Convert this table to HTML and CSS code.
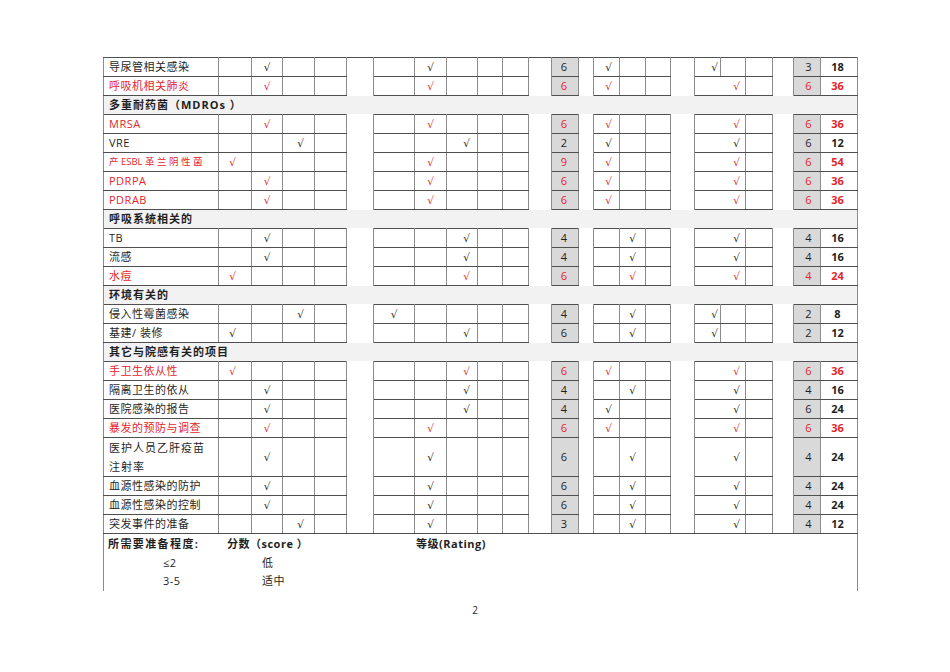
FILE: index.html
```html
<!DOCTYPE html>
<html lang="zh">
<head>
<meta charset="utf-8">
<title>院感风险评估</title>
<link rel="stylesheet" href="styles.css">
</head>
<body>
<div class="page">
<table class="grid">
<colgroup>
<col style="width:115px"><col style="width:33px"><col style="width:31px"><col style="width:32px"><col style="width:32px">
<col style="width:27px">
<col style="width:41px"><col style="width:32px"><col style="width:31px"><col style="width:25px"><col style="width:26px">
<col style="width:23px"><col style="width:27px"><col style="width:15px">
<col style="width:26px"><col style="width:26px"><col style="width:25px">
<col style="width:24px">
<col style="width:26px"><col style="width:25px"><col style="width:27px">
<col style="width:21px"><col style="width:27px"><col style="width:37px">
</colgroup>
<tbody>
<tr class="first">
<td class="n">导尿管相关感染</td>
<td></td><td class="k-b">√</td><td></td><td></td><td class="g"></td>
<td></td><td class="k-f">√</td><td></td><td></td><td></td><td class="g"></td>
<td class="s">6</td><td class="g"></td>
<td class="k-j">√</td><td></td><td></td><td class="g"></td>
<td class="k-m">√</td><td></td><td></td><td class="g"></td>
<td class="s s2">3</td><td class="t">18</td>
</tr>
<tr class="r">
<td class="n">呼吸机相关肺炎</td>
<td></td><td class="k-b">√</td><td></td><td></td><td class="g"></td>
<td></td><td class="k-f">√</td><td></td><td></td><td></td><td class="g"></td>
<td class="s">6</td><td class="g"></td>
<td class="k-j">√</td><td></td><td></td><td class="g"></td>
<td class="k-mn" colspan="2">√</td><td></td><td class="g"></td>
<td class="s s2">6</td><td class="t">36</td>
</tr>
<tr class="h"><td colspan="24">多重耐药菌（MDROs ）</td></tr>
<tr class="r">
<td class="n">MRSA</td>
<td></td><td class="k-b">√</td><td></td><td></td><td class="g"></td>
<td></td><td class="k-f">√</td><td></td><td></td><td></td><td class="g"></td>
<td class="s">6</td><td class="g"></td>
<td class="k-j">√</td><td></td><td></td><td class="g"></td>
<td class="k-mn" colspan="2">√</td><td></td><td class="g"></td>
<td class="s s2">6</td><td class="t">36</td>
</tr>
<tr>
<td class="n">VRE</td>
<td></td><td></td><td class="k-c">√</td><td></td><td class="g"></td>
<td></td><td></td><td class="k-g">√</td><td></td><td></td><td class="g"></td>
<td class="s">2</td><td class="g"></td>
<td class="k-j">√</td><td></td><td></td><td class="g"></td>
<td class="k-mn" colspan="2">√</td><td></td><td class="g"></td>
<td class="s s2">6</td><td class="t">12</td>
</tr>
<tr class="r">
<td class="n esbl">产 ESBL 革 兰 阴 性 菌</td>
<td class="k-a">√</td><td></td><td></td><td></td><td class="g"></td>
<td></td><td class="k-f">√</td><td></td><td></td><td></td><td class="g"></td>
<td class="s">9</td><td class="g"></td>
<td class="k-j">√</td><td></td><td></td><td class="g"></td>
<td class="k-mn" colspan="2">√</td><td></td><td class="g"></td>
<td class="s s2">6</td><td class="t">54</td>
</tr>
<tr class="r">
<td class="n">PDRPA</td>
<td></td><td class="k-b">√</td><td></td><td></td><td class="g"></td>
<td></td><td class="k-f">√</td><td></td><td></td><td></td><td class="g"></td>
<td class="s">6</td><td class="g"></td>
<td class="k-j">√</td><td></td><td></td><td class="g"></td>
<td class="k-mn" colspan="2">√</td><td></td><td class="g"></td>
<td class="s s2">6</td><td class="t">36</td>
</tr>
<tr class="r">
<td class="n">PDRAB</td>
<td></td><td class="k-b">√</td><td></td><td></td><td class="g"></td>
<td></td><td class="k-f">√</td><td></td><td></td><td></td><td class="g"></td>
<td class="s">6</td><td class="g"></td>
<td class="k-j">√</td><td></td><td></td><td class="g"></td>
<td class="k-mn" colspan="2">√</td><td></td><td class="g"></td>
<td class="s s2">6</td><td class="t">36</td>
</tr>
<tr class="h"><td colspan="24">呼吸系统相关的</td></tr>
<tr>
<td class="n">TB</td>
<td></td><td class="k-b">√</td><td></td><td></td><td class="g"></td>
<td></td><td></td><td class="k-g">√</td><td></td><td></td><td class="g"></td>
<td class="s">4</td><td class="g"></td>
<td></td><td class="k-k">√</td><td></td><td class="g"></td>
<td class="k-mn" colspan="2">√</td><td></td><td class="g"></td>
<td class="s s2">4</td><td class="t">16</td>
</tr>
<tr>
<td class="n">流感</td>
<td></td><td class="k-b">√</td><td></td><td></td><td class="g"></td>
<td></td><td></td><td class="k-g">√</td><td></td><td></td><td class="g"></td>
<td class="s">4</td><td class="g"></td>
<td></td><td class="k-k">√</td><td></td><td class="g"></td>
<td class="k-mn" colspan="2">√</td><td></td><td class="g"></td>
<td class="s s2">4</td><td class="t">16</td>
</tr>
<tr class="r">
<td class="n">水痘</td>
<td class="k-a">√</td><td></td><td></td><td></td><td class="g"></td>
<td></td><td></td><td class="k-g">√</td><td></td><td></td><td class="g"></td>
<td class="s">6</td><td class="g"></td>
<td></td><td class="k-k">√</td><td></td><td class="g"></td>
<td class="k-mn" colspan="2">√</td><td></td><td class="g"></td>
<td class="s s2">4</td><td class="t">24</td>
</tr>
<tr class="h"><td colspan="24">环境有关的</td></tr>
<tr>
<td class="n">侵入性霉菌感染</td>
<td></td><td></td><td class="k-c">√</td><td></td><td class="g"></td>
<td class="k-e">√</td><td></td><td></td><td></td><td></td><td class="g"></td>
<td class="s">4</td><td class="g"></td>
<td></td><td class="k-k">√</td><td></td><td class="g"></td>
<td class="k-m">√</td><td></td><td></td><td class="g"></td>
<td class="s s2">2</td><td class="t">8</td>
</tr>
<tr>
<td class="n">基建/ 装修</td>
<td class="k-a">√</td><td></td><td></td><td></td><td class="g"></td>
<td></td><td></td><td class="k-g">√</td><td></td><td></td><td class="g"></td>
<td class="s">6</td><td class="g"></td>
<td></td><td class="k-k">√</td><td></td><td class="g"></td>
<td class="k-m">√</td><td></td><td></td><td class="g"></td>
<td class="s s2">2</td><td class="t">12</td>
</tr>
<tr class="h"><td colspan="24">其它与院感有关的项目</td></tr>
<tr class="r">
<td class="n">手卫生依从性</td>
<td class="k-a">√</td><td></td><td></td><td></td><td class="g"></td>
<td></td><td></td><td class="k-g">√</td><td></td><td></td><td class="g"></td>
<td class="s">6</td><td class="g"></td>
<td class="k-j">√</td><td></td><td></td><td class="g"></td>
<td class="k-mn" colspan="2">√</td><td></td><td class="g"></td>
<td class="s s2">6</td><td class="t">36</td>
</tr>
<tr>
<td class="n">隔离卫生的依从</td>
<td></td><td class="k-b">√</td><td></td><td></td><td class="g"></td>
<td></td><td></td><td class="k-g">√</td><td></td><td></td><td class="g"></td>
<td class="s">4</td><td class="g"></td>
<td></td><td class="k-k">√</td><td></td><td class="g"></td>
<td class="k-mn" colspan="2">√</td><td></td><td class="g"></td>
<td class="s s2">4</td><td class="t">16</td>
</tr>
<tr>
<td class="n">医院感染的报告</td>
<td></td><td class="k-b">√</td><td></td><td></td><td class="g"></td>
<td></td><td></td><td class="k-g">√</td><td></td><td></td><td class="g"></td>
<td class="s">4</td><td class="g"></td>
<td class="k-j">√</td><td></td><td></td><td class="g"></td>
<td class="k-mn" colspan="2">√</td><td></td><td class="g"></td>
<td class="s s2">6</td><td class="t">24</td>
</tr>
<tr class="r">
<td class="n">暴发的预防与调查</td>
<td></td><td class="k-b">√</td><td></td><td></td><td class="g"></td>
<td></td><td class="k-f">√</td><td></td><td></td><td></td><td class="g"></td>
<td class="s">6</td><td class="g"></td>
<td class="k-j">√</td><td></td><td></td><td class="g"></td>
<td class="k-mn" colspan="2">√</td><td></td><td class="g"></td>
<td class="s s2">6</td><td class="t">36</td>
</tr>
<tr class="tall">
<td class="n wide">医护人员乙肝疫苗<br>注射率</td>
<td></td><td class="k-b">√</td><td></td><td></td><td class="g"></td>
<td></td><td class="k-f">√</td><td></td><td></td><td></td><td class="g"></td>
<td class="s">6</td><td class="g"></td>
<td></td><td class="k-k">√</td><td></td><td class="g"></td>
<td class="k-mn" colspan="2">√</td><td></td><td class="g"></td>
<td class="s s2">4</td><td class="t">24</td>
</tr>
<tr>
<td class="n">血源性感染的防护</td>
<td></td><td class="k-b">√</td><td></td><td></td><td class="g"></td>
<td></td><td class="k-f">√</td><td></td><td></td><td></td><td class="g"></td>
<td class="s">6</td><td class="g"></td>
<td></td><td class="k-k">√</td><td></td><td class="g"></td>
<td class="k-mn" colspan="2">√</td><td></td><td class="g"></td>
<td class="s s2">4</td><td class="t">24</td>
</tr>
<tr>
<td class="n">血源性感染的控制</td>
<td></td><td class="k-b">√</td><td></td><td></td><td class="g"></td>
<td></td><td class="k-f">√</td><td></td><td></td><td></td><td class="g"></td>
<td class="s">6</td><td class="g"></td>
<td></td><td class="k-k">√</td><td></td><td class="g"></td>
<td class="k-mn" colspan="2">√</td><td></td><td class="g"></td>
<td class="s s2">4</td><td class="t">24</td>
</tr>
<tr class="last">
<td class="n">突发事件的准备</td>
<td></td><td></td><td class="k-c">√</td><td></td><td class="g"></td>
<td></td><td class="k-f">√</td><td></td><td></td><td></td><td class="g"></td>
<td class="s">3</td><td class="g"></td>
<td></td><td class="k-k">√</td><td></td><td class="g"></td>
<td class="k-mn" colspan="2">√</td><td></td><td class="g"></td>
<td class="s s2">4</td><td class="t">12</td>
</tr>
</tbody>
</table>
<div class="foot">
<span class="b f-need">所需要准备程度:</span>
<span class="b f-score">分数（score ）</span>
<span class="b f-rate">等级(Rating)</span>
<span class="f-v1">≤2</span>
<span class="f-l1">低</span>
<span class="f-v2">3-5</span>
<span class="f-l2">适中</span>
</div>
<div class="pno">2</div>
</div>
</body>
</html>
```
FILE: styles.css
```css
html, body {
  margin: 0;
  padding: 0;
  background: #ffffff;
}
body {
  font-family: "Open Sans", "Noto Sans CJK SC", sans-serif;
  font-size: 11px;
  color: #1f1f1f;
}
.page {
  padding: 57px 0 0 103px;
  width: 755px;
}
.grid {
  border-collapse: collapse;
  table-layout: fixed;
  width: 755px;
}
.grid td {
  height: 18px;
  padding: 0;
  text-align: center;
  vertical-align: middle;
  line-height: 18px;
  border-top: 1px solid #4f4f4f;
  border-bottom: 1px solid #4f4f4f;
  border-left: 1px solid #8c8c8c;
  border-right: 1px solid #8c8c8c;
  white-space: nowrap;
  overflow: hidden;
}
.grid td.n {
  text-align: left;
  padding-left: 5px;
  letter-spacing: 0.5px;
  font-family: "Open Sans", "Noto Sans CJK SC", sans-serif;
}
.grid td.n.wide {
  letter-spacing: 1px;
  white-space: normal;
  line-height: 19px;
}
.grid td.n.esbl {
  font-size: 9.5px;
  letter-spacing: 0;
  white-space: pre;
}
.grid tr.tall td {
  height: 38px;
}
.grid td.g {
  border-top: none;
  border-bottom: none;
  background: #ffffff;
}
.grid tr.first td.g {
  border-top: 1px solid #4f4f4f;
}
.grid tr.last td.g {
  border-bottom: 1px solid #4f4f4f;
}
.grid td.s {
  background: #d9d9d9;
  padding-right: 2px;
}
.grid td.s2 {
  padding-left: 3px;
  padding-right: 0;
}
.grid td.t {
  font-weight: 700;
  font-size: 11px;
  padding-right: 3px;
}
.grid tr.h td {
  background: #f2f2f2;
  border-top: none;
  border-bottom: none;
  text-align: left;
  padding-left: 5px;
  font-weight: 700;
  letter-spacing: 1px;
}
.grid tr.r td {
  color: #e3262c;
}
.grid tr.r td.t {
  color: #e3262c;
}
.grid td[class^="k-"] {
  font-family: "DejaVu Sans", sans-serif;
  font-size: 10.5px;
}
.k-a { padding-right: 5px !important; }
.k-c { padding-left: 4px !important; }
.k-g { padding-left: 9px !important; }
.k-j { padding-left: 4px !important; }
.k-m { text-align: right !important; padding-right: 2px !important; }
.k-mn { text-align: right !important; padding-right: 5px !important; }
.foot {
  box-sizing: border-box;
  width: 755px;
  height: 57px;
  border-left: 1px solid #8c8c8c;
  border-right: 1px solid #8c8c8c;
  display: grid;
  grid-template-columns: 4px 55px 64px 35px 154px 1fr;
  grid-template-rows: 19px 18px 18px;
  padding-top: 1px;
  line-height: 18px;
  letter-spacing: 0.5px;
}
.b { font-weight: 700; }
.f-need { grid-column: 2 / 4; grid-row: 1; letter-spacing: 1.4px; }
.f-score { grid-column: 4 / 6; grid-row: 1; }
.f-rate { grid-column: 6; grid-row: 1; }
.f-v1 { grid-column: 3; grid-row: 2; }
.f-l1 { grid-column: 5; grid-row: 2; }
.f-v2 { grid-column: 3; grid-row: 3; }
.f-l2 { grid-column: 5; grid-row: 3; }
.pno {
  margin-left: -103px;
  width: 950px;
  text-align: center;
  font-size: 10px;
  margin-top: 12px;
  line-height: 14px;
}
```
